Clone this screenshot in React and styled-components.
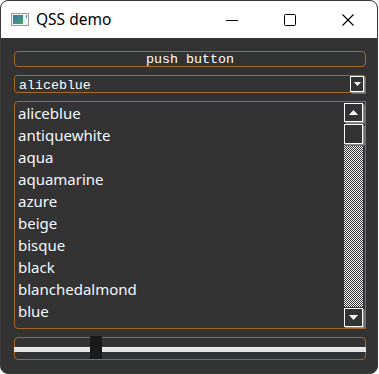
import React from "react"
import styled, { createGlobalStyle } from "styled-components"

const Global = createGlobalStyle`
  html, body {
    margin: 0;
    padding: 0;
    background: #ffffff;
  }
`

const ORANGE = "#a4692c"
const MONO = `"Liberation Mono", "DejaVu Sans Mono", monospace`
const UI = `"Segoe UI", "Noto Sans", "Open Sans", sans-serif`

const colors = [
  "aliceblue",
  "antiquewhite",
  "aqua",
  "aquamarine",
  "azure",
  "beige",
  "bisque",
  "black",
  "blanchedalmond",
  "blue",
  "blueviolet",
]

const Window = styled.div`
  width: 376px;
  height: 372px;
  border: 1px solid #3c3c3c;
  border-radius: 8px;
  overflow: hidden;
  display: flex;
  flex-direction: column;
  background: #333333;
`

const TitleBar = styled.div`
  height: 37px;
  flex: none;
  background: #ffffff;
  display: flex;
  align-items: center;
  font-family: ${UI};
  font-size: 15.5px;
  color: #000;
`

const AppIcon = styled.svg`
  margin-left: 10px;
  margin-right: 7px;
`

const Title = styled.span`
  flex: 1;
  margin-top: -1px;
`

const Caption = styled.div`
  width: 58px;
  height: 37px;
  display: flex;
  align-items: center;
  justify-content: center;
`

const Body = styled.div`
  flex: 1;
  display: flex;
  flex-direction: column;
  gap: 8px;
  padding: 13px 11px 0 13px;
`

const PushButton = styled.div`
  height: 14px;
  border: 1px solid ${ORANGE};
  border-radius: 4px;
  font-family: ${MONO};
  font-size: 13.3px;
  line-height: 16px;
  color: #fff;
  text-align: center;
`

const Combo = styled.div`
  height: 16px;
  border: 1px solid ${ORANGE};
  border-radius: 3px;
  display: flex;
  align-items: center;
  font-family: ${MONO};
  font-size: 13.3px;
  color: #fff;
  padding-left: 4px;
`

const ComboText = styled.span`
  flex: 1;
  padding-top: 2px;
`

const ArrowBox = styled.div`
  width: ${p => p.$w}px;
  height: ${p => p.$h}px;
  box-sizing: border-box;
  border: 1px solid #ffffff;
  box-shadow: 1px 1px 0 0 #8c8c8c, 2px 2px 0 0 #6a6a6a;
  display: flex;
  align-items: center;
  justify-content: center;
  flex: none;
`

const ComboArrow = styled(ArrowBox)`
  margin-right: 1px;
`

const List = styled.div`
  height: 226px;
  border: 1px solid ${ORANGE};
  border-radius: 4px 0 0 4px;
  display: flex;
  overflow: hidden;
`

const Items = styled.div`
  flex: 1;
  padding-left: 3px;
  overflow: hidden;
`

const Item = styled.div`
  height: 22px;
  line-height: 22px;
  font-family: ${UI};
  font-size: 15px;
  color: #f4f8ff;
  white-space: nowrap;
`

const ScrollBar = styled.div`
  width: 19px;
  margin: 1px 2px 1px 0;
  display: flex;
  flex-direction: column;
`

const Track = styled.div`
  flex: 1;
  margin: 2px 0 1px;
  background: repeating-conic-gradient(#ffffff 0 25%, #2e2e2e 0 50%) 0 0 / 2px 2px;
  display: flex;
  flex-direction: column;
`

const Handle = styled(ArrowBox)`
  background: #333333;
`

const Slider = styled.div`
  height: 21px;
  border: 1px solid ${ORANGE};
  border-radius: 4px;
  position: relative;
  display: flex;
  align-items: center;
`

const Groove = styled.div`
  flex: 1;
  height: 4px;
  margin-left: -1px;
  margin-right: -1px;
  background: #e4e4e4;
  border-top: 1px solid #f2f2f2;
  margin-top: 2px;
`

const SliderHandle = styled.div`
  position: absolute;
  left: 75px;
  top: -2px;
  width: 12px;
  height: 23px;
  background: #1a1a1a;
`

const Tri = ({ up }) => (
  <svg width="9" height="5" viewBox="0 0 9 5">
    <polygon points={up ? "4.5,0 9,5 0,5" : "0,0 9,0 4.5,5"} fill="#fff" />
  </svg>
)

export default function App() {
  return (
    <>
      <Global />
      <Window>
        <TitleBar>
          <AppIcon width="18" height="13" viewBox="0 0 18 13">
            <defs>
              <linearGradient id="g" x1="0" y1="0" x2="1" y2="1">
                <stop offset="0" stopColor="#3a6fb0" />
                <stop offset="1" stopColor="#4aa86a" />
              </linearGradient>
            </defs>
            <rect x="0.5" y="0.5" width="17" height="12" fill="#f4f4f4" stroke="#9a9a9a" />
            <rect x="2" y="2" width="10" height="9" fill="url(#g)" />
            <rect x="15" y="2" width="1" height="3" fill="#4a7fc0" />
          </AppIcon>
          <Title>QSS demo</Title>
          <Caption>
            <svg width="12" height="12" viewBox="0 0 12 12">
              <line x1="0" y1="6.5" x2="12" y2="6.5" stroke="#000" strokeWidth="1" />
            </svg>
          </Caption>
          <Caption>
            <svg width="12" height="12" viewBox="0 0 12 12">
              <rect x="0.5" y="0.5" width="11" height="11" rx="1" fill="none" stroke="#000" strokeWidth="1" />
            </svg>
          </Caption>
          <Caption>
            <svg width="12" height="12" viewBox="0 0 12 12">
              <path d="M0.5 0.5 L11.5 11.5 M11.5 0.5 L0.5 11.5" stroke="#000" strokeWidth="1.1" />
            </svg>
          </Caption>
        </TitleBar>
        <Body>
          <PushButton>push button</PushButton>
          <Combo>
            <ComboText>aliceblue</ComboText>
            <ComboArrow $w={14} $h={16}>
              <svg width="7" height="4" viewBox="0 0 7 4">
                <polygon points="0,0 7,0 3.5,4" fill="#fff" />
              </svg>
            </ComboArrow>
          </Combo>
          <List>
            <Items>
              {colors.map(c => (
                <Item key={c}>{c}</Item>
              ))}
            </Items>
            <ScrollBar>
              <ArrowBox $w={19} $h={19}>
                <Tri up />
              </ArrowBox>
              <Track>
                <Handle $w={19} $h={20} />
              </Track>
              <ArrowBox $w={19} $h={19}>
                <Tri />
              </ArrowBox>
            </ScrollBar>
          </List>
          <Slider>
            <Groove />
            <SliderHandle />
          </Slider>
        </Body>
      </Window>
    </>
  )
}
